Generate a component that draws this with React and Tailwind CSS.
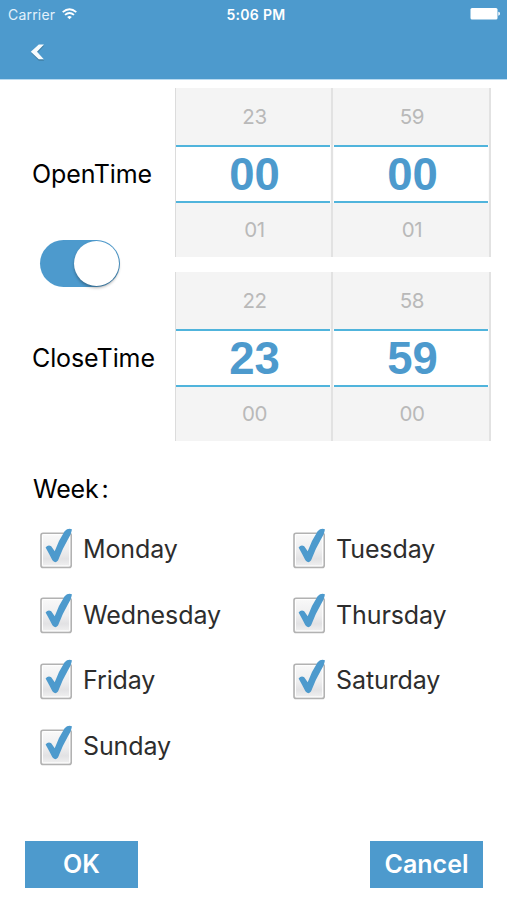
import React from 'react';

function Wheel({ before, value, after, size, gap }) {
  return (
    <div className={`flex flex-col border-r-2 border-[#e2e2e2] bg-[#f4f4f4] text-[#b9b9b9] ${size}`}>
      <div className="flex h-[57px] items-center justify-center pl-[2px] pt-[2px] text-[20.5px] tracking-[-0.4px]">{before}</div>
      <div className={`flex h-[58px] border-[#fbfbfb] bg-white ${gap}`}>
        <div className="flex w-full items-center justify-center border-y-2 border-[#50b4dc] pl-[3px] pt-[2px] font-['Liberation_Sans',sans-serif] text-[45.5px] font-bold text-[#4d9acd]">
          {value}
        </div>
      </div>
      <div className="flex h-[54px] items-center justify-center pl-[2px] pt-[1px] text-[20.5px] tracking-[-0.4px]">{after}</div>
    </div>
  );
}

function TimePicker({ hours, minutes }) {
  return (
    <div className="flex h-[169px] w-[316px] border-l border-[#dcdcdc]">
      <Wheel before={hours[0]} value={hours[1]} after={hours[2]} size="w-[157px]" gap="border-r" />
      <Wheel before={minutes[0]} value={minutes[1]} after={minutes[2]} size="w-[158px]" gap="border-x" />
    </div>
  );
}

function Day({ name }) {
  return (
    <div className="flex h-[65.6px] items-center">
      <svg className="h-[44px] w-[35px] shrink-0" viewBox="0 0 35 44">
        <defs>
          <linearGradient id="box" x1="0" y1="0" x2="0" y2="1">
            <stop offset="0" stopColor="#f9f9f9" />
            <stop offset="0.5" stopColor="#eeeeef" />
            <stop offset="0.75" stopColor="#e2e2e4" />
            <stop offset="1" stopColor="#f2f2f2" />
          </linearGradient>
        </defs>
        <rect x="2" y="6.2" width="30.2" height="34.2" rx="2" fill="url(#box)" stroke="#b2b2b2" strokeWidth="1.6" />
        <rect x="3.5" y="7.7" width="27.2" height="31.2" rx="1" fill="none" stroke="#fff" strokeWidth="1" />
        <path d="M6.6 20.5Q8.9 17.5 12.2 19.2L15.7 24.2Q19.2 14 25.6 4.2Q28.8.9 32.9 2.2Q32.6 6.3 29 12.3Q23.5 21.5 19 33.6Q16 36.8 13.4 33.3Q10.5 27.5 6.6 20.5Z" fill="#4d9acd" />
      </svg>
      <span className="ml-[9px] pt-[1px] text-[25px] leading-[32px] tracking-[-0.1px] text-[#2d2d2d]">{name}</span>
    </div>
  );
}

export default function App() {
  return (
    <div className="flex h-[900px] w-[507px] flex-col overflow-hidden bg-white font-['Inter',sans-serif] text-black">
      <header className="h-[80px] shrink-0 border-b border-[#b9daf0] bg-[#4d9acd] text-white">
        <div className="grid h-[28px] grid-cols-3 items-center pl-[8px] pr-[6px]">
          <div className="flex items-center gap-[7px] text-[14px] text-[#e2f1fc]">
            <span className="tracking-[0.2px]">Carrier</span>
            <svg className="h-[12px] w-[15px]" viewBox="0 0 15 12" fill="none" stroke="#fff" strokeWidth="1.8">
              <path d="M.7 4.2Q7.5-1.8 14.3 4.2M3 6.9Q7.5 3 12 6.9" />
              <path d="M7.5 11.2L5.2 8.9Q7.5 7 9.8 8.9Z" fill="#fff" stroke="none" />
            </svg>
          </div>
          <div className="pl-[3px] text-center text-[14px] font-semibold tracking-[0.3px]">5:06 PM</div>
          <svg className="h-[12px] w-[31px] justify-self-end" viewBox="0 0 31 12" fill="#fff">
            <rect x="0.5" y="0" width="27" height="11.5" rx="1.5" />
            <path d="M28.3 3.8Q30 4 30 5.8Q30 7.4 28.3 7.7Z" />
          </svg>
        </div>
        <svg className="ml-[29px] mt-[14px] h-[21px] w-[18px]" viewBox="0 0 18 21">
          <path d="M9.8 2.8H15.2L8.2 10L15.2 17.8H9.8L2.2 10Z" fill="#37708f" opacity=".65" transform="translate(0 1)" />
          <path d="M9.8 2.4H15L8 9.8L14.8 17.2H9.8L1.8 9.8Z" fill="#f7fbfd" />
        </svg>
      </header>

      <main className="flex flex-1 flex-col">
        <section className="flex pt-[8px]">
          <div className="flex w-[175px] flex-col pl-[32px]">
            <div className="mt-[70px] h-[32px] text-[25px] leading-[32px] tracking-[-0.1px]">OpenTime</div>
            <div className="ml-[8px] mt-[50px] flex h-[47px] w-[80px] justify-end rounded-full bg-[#4d9acd] p-[1px]">
              <div className="h-[45px] w-[45px] rounded-full bg-white shadow-[0_2px_3px_rgba(0,0,0,0.3)]" />
            </div>
            <div className="mt-[55px] h-[32px] text-[25px] leading-[32px] tracking-[-0.1px]">CloseTime</div>
          </div>
          <div className="flex flex-col gap-[15px]">
            <TimePicker hours={['23', '00', '01']} minutes={['59', '00', '01']} />
            <TimePicker hours={['22', '23', '00']} minutes={['58', '59', '00']} />
          </div>
        </section>

        <h2 className="mt-[32px] h-[32px] pl-[33px] text-[25px] leading-[32px] tracking-[-0.2px]">
          Week<span className="ml-[3px]">:</span>
        </h2>

        <section className="mt-[11px] grid grid-cols-[253px_1fr] pl-[39px]">
          <Day name="Monday" />
          <Day name="Tuesday" />
          <Day name="Wednesday" />
          <Day name="Thursday" />
          <Day name="Friday" />
          <Day name="Saturday" />
          <Day name="Sunday" />
        </section>
      </main>

      <footer className="flex shrink-0 justify-between pb-[12px] pl-[25px] pr-[24px] text-[25px] font-semibold text-white">
        <button className="h-[47px] w-[113px] bg-[#4d9acd] pt-[1px]">OK</button>
        <button className="h-[47px] w-[113px] bg-[#4d9acd] pt-[1px]">Cancel</button>
      </footer>
    </div>
  );
}
